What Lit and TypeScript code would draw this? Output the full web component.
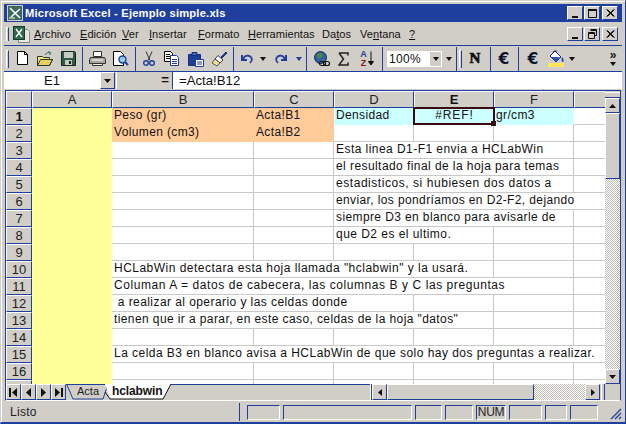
import { LitElement, html, css, svg } from "lit";
import { customElement } from "lit/decorators.js";

const B = "#1f3f9f";
const icons: Record<string, any> = {
  new: svg`<path d="M2.5 .5h7l3 3v10h-10z" fill="#fff" stroke="#000"/><path d="M9.5 .5v3h3" fill="none" stroke="#000"/>`,
  open: svg`<path d="M.5 5.5h5l1 1h6v2h3l-3 6h-12z" fill="#f4e27a" stroke="#2a3a2a"/><path d="M3 9h11l-2 5H1z" fill="#e8d060"/><path d="M.5 14.5l3-6h12l-3 6z" fill="none" stroke="#2a3a2a"/><path d="M8 4c1-2 3-3 5-2M11 .5l3 1.5-1.5 2" fill="none" stroke="#1f6f6f"/>`,
  save: svg`<path d="M.5 .5h13l1 1v13h-14z" fill="#2c5a46" stroke="#12281e"/><rect x="3" y="1" width="9" height="6" fill="#c9c7bf"/><rect x="4" y="9" width="7" height="5" fill="#c9c7bf"/><rect x="8" y="10" width="2" height="3" fill="#12281e"/>`,
  print: svg`<path d="M4.5 .5h8v5h-8z" fill="#fff" stroke="#333"/><path d="M1.5 6.5h14l1 2v4h-16v-4z" fill="#a9a89f" stroke="#333"/><path d="M3 9h11" stroke="#fff"/><path d="M3.5 12.5h10v2h-10z" fill="#eee" stroke="#333"/>`,
  prev: svg`<path d="M1.5 .5h7l3 3v11h-10z" fill="#fff" stroke="#000"/><circle cx="10.5" cy="8.5" r="3.5" fill="#8fd0e8" stroke="#1f3f9f" stroke-width="1.4"/><path d="M13 11l3 3" stroke="#1f3f9f" stroke-width="2"/>`,
  cut: svg`<path d="M3 .5l4 9M9 .5l-4 9" stroke="#333" fill="none"/><circle cx="3" cy="12" r="2.3" fill="none" stroke="${B}" stroke-width="1.4"/><circle cx="9" cy="12" r="2.3" fill="none" stroke="${B}" stroke-width="1.4"/>`,
  copy: svg`<path d="M.5 .5h6l2 2v8h-8z" fill="#fff" stroke="#000"/><path d="M2 3.5h4M2 5.5h4M2 7.5h4" stroke="#000"/><path d="M6.5 4.5h6l2 2v8h-8z" fill="#fff" stroke="${B}"/><path d="M8 8.5h5M8 10.5h5M8 12.5h5" stroke="${B}"/>`,
  paste: svg`<path d="M1.5 3.5h12v11h-12z" fill="${B}" stroke="#15307c"/><path d="M5 1.5h5v3h-5z" fill="#4a66b8" stroke="#15307c"/><path d="M8.5 8.5h8v7h-8z" fill="#fff" stroke="${B}"/><path d="M10 11h5M10 13h5" stroke="${B}"/>`,
  brush: svg`<path d="M10 6l5-5 1 1-5 5z" fill="${B}" stroke="#15307c"/><path d="M7 4.500l5 4.500-3 3-5-4z" fill="#fff" stroke="#333"/><path d="M4 8l5 4-3 3-5-3z" fill="#f0e090" stroke="#555"/>`,
  undo: svg`<path d="M2 3v5h5" fill="none" stroke="${B}" stroke-width="2"/><path d="M3 7c2-4 7-5 9 0 0 2-1 3-2 4" fill="none" stroke="${B}" stroke-width="1.7"/>`,
  redo: svg`<path d="M11 3v5h-5" fill="none" stroke="${B}" stroke-width="2"/><path d="M10 7c-2-4-7-5-9 0 0 2 1 3 2 4" fill="none" stroke="${B}" stroke-width="1.7"/>`,
  globe: svg`<circle cx="7.500" cy="6.500" r="6" fill="#2f5fa8" stroke="#16305c"/><path d="M4 3l4-1 2 2-2 3-3 1zM10 8l2 1-2 3z" fill="#4e8a3a"/><rect x="6.500" y="10.500" width="6" height="4" rx="2" fill="none" stroke="#111" stroke-width="1.200"/><rect x="10.500" y="10.500" width="6" height="4" rx="2" fill="none" stroke="#111" stroke-width="1.200"/>`,
  sigma: svg`<path d="M1 1h9v2.500M10 10.500V13H1l4.500-6L1 1" fill="none" stroke="#222" stroke-width="1.500"/>`,
  fill: svg`<path d="M7 1l6 6-5 5-6-6z" fill="#fff" stroke="#15307c"/><path d="M5 3l1-2h3" fill="none" stroke="#15307c"/><path d="M3 7h9l-4 5z" fill="#2f55b0"/><path d="M14 7c2 2 2 4 1 5-1 0-2-2-1-5z" fill="${B}"/><rect x="0" y="13" width="16" height="4" fill="#ffe45c"/>`,
  azarrow: svg`<path d="M3 .5V13M0.500 10.500L3 14l2.500-3.500z" fill="#111" stroke="#111"/>`,
};

type T = { w: number; k?: string; ic?: string; iw?: number; ih?: number; t?: string };
const tool: T[] = [
  { w: 1, k: "sp" }, { w: 5, k: "grip" }, { w: 23, ic: "new", iw: 14, ih: 15 }, { w: 24, ic: "open", iw: 17, ih: 16 }, { w: 22, ic: "save", iw: 15, ih: 15 },
  { w: 6, k: "sep" }, { w: 24, ic: "print", iw: 17, ih: 15 }, { w: 23, ic: "prev", iw: 17, ih: 16 },
  { w: 6, k: "sep" }, { w: 22, ic: "cut", iw: 12, ih: 15 }, { w: 23, ic: "copy", iw: 15, ih: 15 }, { w: 25, ic: "paste", iw: 17, ih: 16 }, { w: 22, ic: "brush", iw: 17, ih: 16 },
  { w: 6, k: "sep" }, { w: 22, ic: "undo", iw: 14, ih: 13 }, { w: 10, k: "drop" }, { w: 27, ic: "redo", iw: 14, ih: 13 }, { w: 8, k: "drop2" },
  { w: 6, k: "sep" }, { w: 24, ic: "globe", iw: 17, ih: 16 }, { w: 21, ic: "sigma", iw: 11, ih: 14 }, { w: 26, k: "az" },
  { w: 4, k: "sep" }, { w: 3, k: "sp" }, { w: 55, k: "combo" }, { w: 13, k: "drop" },
  { w: 2, k: "sep" }, { w: 6, k: "grip" }, { w: 24, t: "N", k: "n" }, { w: 6, k: "sep" }, { w: 22, t: "€", k: "n" }, { w: 6, k: "sep" }, { w: 24, t: "€", k: "n" },
  { w: 22, ic: "fill", iw: 16, ih: 17 }, { w: 10, k: "drop" },
];

const cols = ["A", "B", "C", "D", "E", "F", ""];
type C = [number, number, string, string?, number?];
const rows: Record<number, C[]> = {
  1: [[2, 1, "Peso (gr)", "o"], [3, 1, "Acta!B1", "o"], [4, 1, "Densidad", "c"], [5, 1, "#REF!", "cm", 0.9], [6, 1, "gr/cm3", "c"]],
  2: [[2, 1, "Volumen (cm3)", "o"], [3, 1, "Acta!B2", "o"]],
  3: [[4, 3, "Esta linea D1-F1 envia a HCLabWin", "", 0.45]],
  4: [[4, 3, "el resultado final de la hoja para temas", "", 0.43]],
  5: [[4, 3, "estadisticos, si hubiesen dos datos a", "", 0.55]],
  6: [[4, 4, "enviar, los pondríamos en D2-F2, dejando", "", 0.38]],
  7: [[4, 3, "siempre D3 en blanco para avisarle de", "", 0.39]],
  8: [[4, 2, "que D2 es el ultimo.", "", 0.46]],
  10: [[2, 4, 'HCLabWin detectara esta hoja llamada "hclabwin" y la usará.', "", 0.48]],
  11: [[2, 5, "Columan A = datos de cabecera, las columnas B y C las preguntas", "", 0.57]],
  12: [[2, 3, " a realizar al operario y las celdas donde", "", 0.43]],
  13: [[2, 4, 'tienen que ir a parar, en este caso, celdas de la hoja "datos"', "", 0.4]],
  15: [[2, 6, "La celda B3 en blanco avisa a HCLabWin de que solo hay dos preguntas a realizar.", "", 0.46]],
};

function rowCells(r: number) {
  const out: C[] = [[1, 1, "", "y"]];
  const list = rows[r] || [];
  let c = 2;
  for (const cell of list) {
    while (c < cell[0]) out.push([c++, 1, ""]);
    out.push(cell);
    c = cell[0] + cell[1];
  }
  while (c <= 7) out.push([c++, 1, ""]);
  return out;
}

@customElement("app-root")
export class AppRoot extends LitElement {
  static styles = css`
    :host { display: block; width: 626px; height: 424px; overflow: hidden; font-family: "Liberation Sans", Arial, sans-serif; }
    .win { box-sizing: border-box; width: 626px; height: 424px; background: #d0cec6; border-top: 1px solid #d0cec6; border-left: 1px solid #d0cec6; border-right: 1px solid #1f3f9f; border-bottom: 2px solid #1f3f9f; padding: 3px 3px 1px 3px; display: flex; flex-direction: column; box-shadow: inset 1px 1px 0 #fff; }
    svg { display: block; shape-rendering: auto; overflow: visible; }
    .title { height: 18px; background: #1f3f9f; color: #fff; font-weight: 700; font-size: 11.2px; display: flex; align-items: center; flex: none; padding-left: 3px; }
    .title .t { margin-left: 2px; letter-spacing: .2px; }
    .spacer { flex: 1; }
    .wb { box-sizing: border-box; width: 16px; height: 14px; background: #d0cec6; border: 1px solid; border-color: #fff #1f3f9f #1f3f9f #fff; display: flex; align-items: center; justify-content: center; margin-left: 1px; flex: none; }
    .wb.gapx { margin-left: 2px; }
    .btns { display: flex; padding-right: 4px; }
    .menu { margin-top: 1px; height: 22px; flex: none; display: flex; align-items: center; font-size: 11px; color: #111; border-bottom: 1px solid #1f3f9f; }
    .mgrip { width: 3px; height: 14px; margin-left: 2px; border-left: 1px solid #fff; border-right: 1px solid #1f3f9f; border-top: 1px solid #fff; box-sizing: border-box; flex: none; }
    .xl { margin-left: 4px; margin-right: 4px; flex: none; }
    .mi { flex: none; white-space: nowrap; letter-spacing: .05px; }
    .mi u { text-underline-offset: 1px; }
    .tools { height: 25px; flex: none; display: flex; align-items: center; border-bottom: 1px solid #1f3f9f; }
    .tc { height: 25px; flex: none; display: flex; align-items: center; justify-content: center; box-sizing: border-box; position: relative; }
    .sepl { width: 1px; height: 24px; background: #1f3f9f; }
    .grip { width: 3px; height: 18px; border: 1px solid; border-color: #fff #1f3f9f #1f3f9f #fff; border-bottom: 0; box-sizing: border-box; }
    .tri { width: 0; height: 0; border: 3.5px solid transparent; border-top: 4px solid #111; border-bottom: 0; flex: none; }
    .tri.b { border-top-color: #1f3f9f; }
    .combo { box-sizing: border-box; width: 55px; height: 16px; background: #fff; display: flex; align-items: center; font-size: 12px; padding-left: 2px; color: #111; }
    .combo span { flex: 1; letter-spacing: .3px; }
    .combo i { width: 11px; height: 14px; background: #d0cec6; display: flex; align-items: center; justify-content: center; margin-right: 1px; }
    .nb { font-weight: 700; font-size: 15.5px; color: #0b1030; font-family: "DejaVu Sans", sans-serif; }
    .nb.s { font-family: "Liberation Serif", serif; font-size: 15px; color: #111; -webkit-text-stroke: .7px #111; }
    .az { font: 700 9px/8.5px "Liberation Sans", sans-serif; text-align: center; }
    .az b { display: block; color: #1f3f9f; }
    .az b + b { color: #8a1a1a; }
    .azwrap { display: flex; align-items: center; gap: 1px; }
    .chev { margin-left: auto; width: 12px; display: flex; flex-direction: column; align-items: center; gap: 4px; margin-right: 3px; font: 700 12px/6px "Liberation Sans", sans-serif; color: #111; }
    .formula { height: 17px; flex: none; display: flex; font-size: 13.2px; color: #111; }
    .name { box-sizing: border-box; width: 96px; background: #fff; text-align: center; line-height: 17px; flex: none; }
    .namedd { box-sizing: border-box; width: 15px; background: #d0cec6; border: 1px solid; border-color: #fff #1f3f9f #1f3f9f #fff; display: flex; align-items: center; justify-content: center; flex: none; }
    .fgap { width: 56px; margin-left: 1px; flex: none; box-sizing: border-box; border-left: 1px solid #fff; text-align: right; padding-right: 3px; font-weight: 700; line-height: 16px; }
    .ftext { flex: 1; background: #fff; padding-left: 6px; line-height: 17px; border-left: 1px solid #1f3f9f; }
    .sheet { margin-top: 1px; margin-left: 1px; border-top: 1px solid #1f3f9f; border-left: 1px solid #1f3f9f; flex: none; height: 294px; display: flex; box-sizing: border-box; width: 616px; border-right: 1px solid #1f3f9f; }
    .gridwrap { width: 599px; height: 293px; overflow: hidden; position: relative; flex: none; }
    .grid { display: grid; grid-template-columns: 26px 80px 142px 80px 80px 80px 80px 32px; grid-auto-rows: 17px; font-size: 12px; color: #111; letter-spacing: .36px; }
    .hd { box-sizing: border-box; background: #d0cec6; border: 1px solid; border-color: #fff #1f3f9f #1f3f9f #fff; text-align: center; font-size: 13px; line-height: 15px; letter-spacing: 0; color: #222; }
    .hd.on { font-weight: 700; color: #111; }
    .c { box-sizing: border-box; border-right: 1px solid #c8c8c8; border-bottom: 1px solid #c8c8c8; background: #fff; white-space: pre; padding-left: 2px; line-height: 15px; overflow: visible; }
    .c.y { background: #ffff99; border-color: #ffff99; }
    .c.o { background: #ffcc99; border-color: #ffcc99; }
    .c.c2, .c.cm { background: #ccffff; border-color: #ccffff; }
    .c.cm { text-align: center; }
    .sel { position: absolute; left: 407px; top: 16px; width: 82px; height: 18px; box-sizing: border-box; border: 2px solid #3a0a10; pointer-events: none; }
    .sel i { position: absolute; right: -3px; bottom: -3px; width: 5px; height: 5px; background: #3a0a10; }
    .vs { width: 15px; flex: none; display: flex; flex-direction: column; box-sizing: border-box; height: 293px; }
    .split { height: 6px; flex: none; border-top: 1px solid #fff; border-bottom: 1px solid #1f3f9f; box-sizing: border-box; margin-top: 1px; }
    .ab { box-sizing: border-box; background: #d0cec6; border: 1px solid; border-color: #fff #1f3f9f #1f3f9f #fff; display: flex; align-items: center; justify-content: center; flex: none; }
    .vs .ab { height: 15px; width: 15px; }
    .thumb { box-sizing: border-box; background: #d0cec6; border: 1px solid; border-color: #fff #1f3f9f #1f3f9f #fff; flex: none; }
    .vs .thumb { height: 66px; }
    .dots { flex: 1; background-image: conic-gradient(#fff 25%, #bdbbb4 0 50%, #fff 0 75%, #bdbbb4 0); background-size: 2px 2px; }
    .tabs { height: 17px; flex: none; margin-left: 1px; width: 616px; display: flex; border-left: 1px solid #1f3f9f; border-right: 1px solid #1f3f9f; box-sizing: border-box; border-bottom: 1px solid #fff; }
    .nav { display: flex; flex: none; }
    .nav .ab { width: 15px; height: 16px; }
    .tabstrip { flex: none; width: 304px; height: 16px; border-top: 1px solid #1f3f9f; position: relative; box-sizing: border-box; display: flex; font-size: 12px; }
    .tabsvg { position: absolute; left: 0; top: -1px; }
    .tab { position: relative; height: 15px; line-height: 13px; flex: none; }
    .tab.a { width: 35px; margin-left: 11px; color: #222; font-size: 11px; }
    .tab.b { font-weight: 700; color: #111; letter-spacing: -.1px; }
    .hs { display: flex; flex: none; height: 16px; }
    .hs .ab { width: 15px; height: 16px; }
    .hs .thumb { width: 147px; height: 16px; }
    .hs .dots { flex: none; width: 51px; }
    .hsplit { width: 2px; border-left: 1px solid #fff; border-right: 1px solid #1f3f9f; box-sizing: border-box; flex: none; }
    .hsplit.r { width: 4px; margin-left: 1px; }
    .status { flex: none; height: 18px; margin-top: 2px; display: flex; font-size: 12px; color: #222; align-items: center; position: relative; }
    .listo { margin-left: 6px; width: 229px; flex: none; letter-spacing: .3px; }
    .st-sep { width: 1px; height: 18px; background: #1f3f9f; flex: none; margin-right: 7px; }
    .p { box-sizing: border-box; height: 15px; border: 1px solid; border-color: #1f3f9f #fff #fff #1f3f9f; flex: none; margin-right: 3px; font-size: 12px; line-height: 13px; text-align: center; letter-spacing: -.3px; }
    .sgrip { position: absolute; right: 0; bottom: 1px; }
  `;

  ic(name: string, w: number, h: number) {
    return html`<svg width=${w} height=${h} viewBox="0 0 ${w} ${h}">${icons[name]}</svg>`;
  }
  glyph(kind: string, c = "#111") {
    const p: Record<string, any> = {
      min: svg`<rect x="2" y="8" width="6" height="2" fill="${c}"/>`,
      max: svg`<path d="M1.500 1.500h8v8h-8zM1 2.500h9" fill="none" stroke="${c}"/><rect x="1" y="1" width="9" height="2" fill="${c}"/>`,
      res: svg`<path d="M3.500 .5h6v6h-2M3.500 1.500h6" fill="none" stroke="${c}"/><path d="M1.500 3.500h6v6h-6zM1.500 4.500h6" fill="none" stroke="${c}"/>`,
      x: svg`<path d="M1.500 1.500l7 7M2.500 1.500l7 7M8.500 1.500l-7 7M9.500 1.500l-7 7" stroke="${c}" fill="none"/>`,
    };
    return html`<svg width="11" height="10" viewBox="0 0 11 10">${p[kind]}</svg>`;
  }
  tri(dir: string) {
    const d: Record<string, string> = { d: "M0 0h7L3.500 4z", u: "M0 4h7L3.500 0z", l: "M4 0v7L0 3.500z", r: "M0 0v7L4 3.500z" };
    const horiz = dir === "l" || dir === "r";
    return html`<svg width=${horiz ? 4 : 7} height=${horiz ? 7 : 4}><path d=${d[dir]} fill="#111"/></svg>`;
  }
  navIcon(kind: number) {
    const p = [
      svg`<path d="M1 1h2v9H1zM9 1v9L4 5.500z" fill="#111"/>`,
      svg`<path d="M8 1v9L3 5.500z" fill="#111"/>`,
      svg`<path d="M3 1v9l5-4.500z" fill="#111"/>`,
      svg`<path d="M2 1v9l5-4.500zM8 1h2v9H8z" fill="#111"/>`,
    ];
    return html`<svg width="11" height="11">${p[kind]}</svg>`;
  }
  toolCell(t: T) {
    let inner: any = "";
    if (t.ic) inner = this.ic(t.ic, t.iw!, t.ih!);
    else if (t.k === "sep") inner = html`<div class="sepl"></div>`;
    else if (t.k === "grip") inner = html`<div class="grip"></div>`;
    else if (t.k === "drop") inner = html`<div class="tri"></div>`;
    else if (t.k === "drop2") inner = html`<div class="tri b"></div>`;
    else if (t.k === "combo") inner = html`<div class="combo"><span>100%</span><i><div class="tri"></div></i></div>`;
    else if (t.k === "n") inner = html`<span class="nb ${t.t === "N" ? "s" : ""}">${t.t}</span>`;
    else if (t.k === "az") inner = html`<div class="azwrap"><div class="az"><b>A</b><b>Z</b></div>${this.ic("azarrow", 6, 15)}</div>`;
    return html`<div class="tc" style="width:${t.w}px">${inner}</div>`;
  }

  render() {
    const menu: [string, string, string, number][] = [
      ["", "A", "rchivo", 46], ["", "E", "dición", 42], ["", "V", "er", 27], ["", "I", "nsertar", 49], ["", "F", "ormato", 50], ["", "H", "erramientas", 74], ["Da", "t", "os", 38], ["Ve", "n", "tana", 49], ["", "?", "", 10],
    ];
    const rowNums = Array.from({ length: 17 }, (_, i) => i + 1);
    return html`<div class="win">
      <div class="title">
        <svg width="16" height="16" viewBox="0 0 16 16"><rect x=".5" y=".5" width="15" height="15" fill="#3c6a58" stroke="#d0cec6"/><path d="M3 3l10 10M13 4L4 12" stroke="#fff" stroke-width="1.500"/><path d="M2 13h6" stroke="#fff"/></svg>
        <span class="t">Microsoft Excel - Ejemplo simple.xls</span>
        <div class="spacer"></div>
        <div class="btns">
          <div class="wb">${this.glyph("min")}</div><div class="wb">${this.glyph("max")}</div><div class="wb gapx">${this.glyph("x")}</div>
        </div>
      </div>
      <div class="menu">
        <div class="mgrip"></div>
        <svg class="xl" width="17" height="17" viewBox="0 0 17 17"><path d="M5.500 3.500h9l2 2v11h-11z" fill="#e8e6de" stroke="#888"/><rect x=".5" y=".5" width="11" height="13" fill="#2c6a50" stroke="#1a3a2a"/><path d="M3 3l6 8M9 3l-6 8" stroke="#fff" stroke-width="1.300"/></svg>
        ${menu.map((m) => html`<span class="mi" style="width:${m[3]}px">${m[0]}<u>${m[1]}</u>${m[2]}</span>`)}
        <div class="spacer"></div>
        <div class="btns">
          <div class="wb">${this.glyph("min")}</div><div class="wb">${this.glyph("res")}</div><div class="wb gapx">${this.glyph("x")}</div>
        </div>
      </div>
      <div class="tools">
        ${tool.map((t) => this.toolCell(t))}
        <div class="chev"><span>»</span><div class="tri"></div></div>
      </div>
      <div class="formula">
        <div class="name">E1</div>
        <div class="namedd">${this.tri("d")}</div>
        <div class="fgap">=</div>
        <div class="ftext">=Acta!B12</div>
      </div>
      <div class="sheet">
        <div class="gridwrap">
          <div class="grid">
            <div class="hd"></div>
            ${cols.map((c) => html`<div class="hd ${c === "E" ? "on" : ""}">${c}</div>`)}
            ${rowNums.map((r) => html`
              <div class="hd ${r === 1 ? "on" : ""}">${r}</div>
              ${rowCells(r).map(([c, span, text, cl, ls]) => html`<div class="c ${cl === "c" ? "c2" : cl || ""}" style="grid-column:${c + 1} / span ${span};${ls ? `letter-spacing:${ls}px` : ""}">${text}</div>`)}
            `)}
          </div>
          <div class="sel"><i></i></div>
        </div>
        <div class="vs">
          <div class="split"></div>
          <div class="ab">${this.tri("u")}</div>
          <div class="thumb"></div>
          <div class="dots"></div>
          <div class="ab">${this.tri("d")}</div>
        </div>
      </div>
      <div class="tabs">
        <div class="nav">
          ${[0, 1, 2, 3].map((k) => html`<div class="ab">${this.navIcon(k)}</div>`)}
        </div>
        <div class="tabstrip">
          <svg class="tabsvg" width="304" height="17"><path d="M1 1l6 14h30l4-12" fill="none" stroke="#1f3f9f"/><path d="M39 0l5 15h53l8-15z" fill="#fff"/><path d="M39 8l5 7h53l8-15" fill="none" stroke="#111"/></svg>
          <span class="tab a">Acta</span><span class="tab b">hclabwin</span>
        </div>
        <div class="hs">
          <div class="hsplit"></div>
          <div class="ab">${this.tri("l")}</div>
          <div class="thumb"></div>
          <div class="dots"></div>
          <div class="ab">${this.tri("r")}</div>
          <div class="hsplit r"></div>
        </div>
      </div>
      <div class="status">
        <span class="listo">Listo</span>
        <div class="st-sep"></div>
        ${[33, 129, 27, 28, 30, 33, 22, 28].map((w, i) => html`<div class="p" style="width:${w}px">${i === 4 ? "NUM" : ""}</div>`)}
        <svg class="sgrip" width="12" height="12"><path d="M11 1L1 11M11 5l-6 6M11 9l-2 2" stroke="#1f3f9f" stroke-width="1.200"/></svg>
      </div>
    </div>`;
  }
}
